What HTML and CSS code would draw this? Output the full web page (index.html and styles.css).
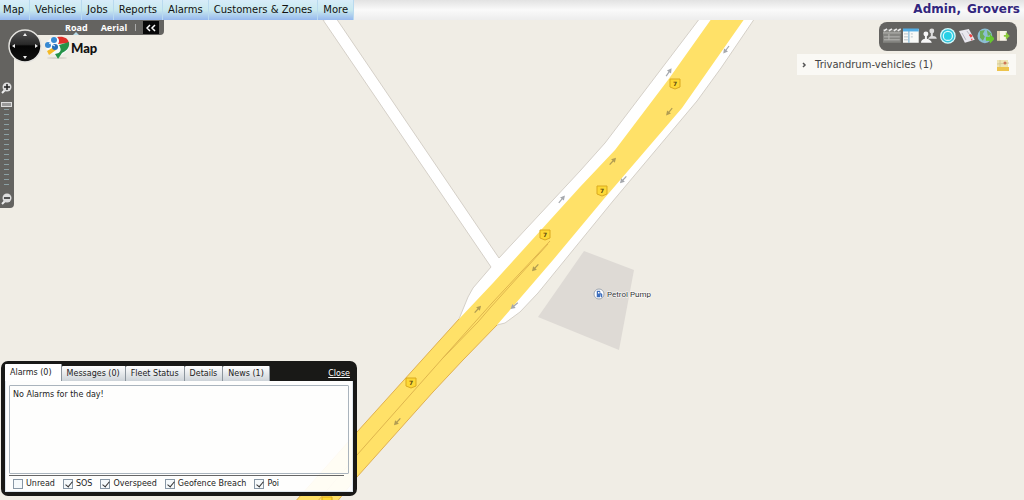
FILE: index.html
```html
<!DOCTYPE html>
<html lang="en">
<head>
<meta charset="utf-8">
<title>Fleet Map</title>
<link rel="stylesheet" href="styles.css">
</head>
<body>
<header class="topbar">
  <nav class="menu">
    <a href="#map">Map</a><a href="#vehicles">Vehicles</a><a href="#jobs">Jobs</a><a href="#reports">Reports</a><a href="#alarms">Alarms</a><a href="#customers">Customers &amp; Zones</a><a href="#more">More</a>
  </nav>
  <div class="account"><span>Admin,</span><span>Grovers</span></div>
</header>
<main class="stage">
  <svg class="map" aria-label="Street map">
    <defs>
      <g id="arrow"><path d="M-5 0H2" stroke="currentColor" stroke-width="1.2"/><path d="M0-2.5L4.5 0L0 2.5Z" fill="currentColor"/></g>
      <path id="shield" d="M-5-5H5V3L0 5L-5 3Z" fill="#fdd835" stroke="#dba91f"/>
    </defs>
    <g transform="translate(0 -20)">
      <path d="M323 20L491 267L473 288L468 297L459 319L497 325L505 323L520 312L538 293L613 201L697 101L721 68L755 18H700L605 143L580 171L499 258L336 18Z" fill="#fff" stroke="#d5d0c8"/>
      <path d="M712 18L668 80L615 150L580 187L493 283L459 319L357 432L294 503H336L357 477L433 392L463 360L497 325L553 260L603 200L682 108L745 18Z" fill="#ffe168"/>
      <path d="M459 319L357 432L294 503M336 503L357 477L433 392L463 360L497 325" fill="none" stroke="#e0b050"/>
      <path d="M550 241L492 303L442 359L357 455L317 502M548 244L490 308L478 322L442 359" fill="none" stroke="#dfb64d"/>
      <path d="M584 251L634 270L619 350L538 317Z" fill="#dedad5"/>
      <g color="#a5a8ad">
        <use href="#arrow" transform="translate(669 72) rotate(-55)"/>
        <use href="#arrow" transform="translate(726 50) rotate(127)"/>
        <use href="#arrow" transform="translate(623 180) rotate(132)"/>
        <use href="#arrow" transform="translate(562 199) rotate(-50)"/>
        <use href="#arrow" transform="translate(514 306) rotate(140)"/>
      </g>
      <g color="#b19c52">
        <use href="#arrow" transform="translate(669 112) rotate(130)"/>
        <use href="#arrow" transform="translate(613 161) rotate(-48)"/>
        <use href="#arrow" transform="translate(535 268) rotate(132)"/>
        <use href="#arrow" transform="translate(478 309) rotate(-48)"/>
        <use href="#arrow" transform="translate(397 422) rotate(132)"/>
      </g>
      <g class="route">
        <use href="#shield" x="675" y="84"/><text x="675" y="86">7</text>
        <use href="#shield" x="602" y="191"/><text x="602" y="193">7</text>
        <use href="#shield" x="545" y="235"/><text x="545" y="237">7</text>
        <use href="#shield" x="411" y="383"/><text x="411" y="385">7</text>
        <use href="#shield" x="327" y="502"/>
      </g>
      <circle cx="599" cy="294" r="5" fill="#fff" stroke="#9da5b0"/>
      <path d="M597 291h3v6h-3zM600 293l2 1v3h-1" fill="#3e6fbd" stroke="#3e6fbd" stroke-width=".5"/>
      <path d="M598 292h1.500v1.500h-1.500z" fill="#fff"/>
      <text class="place" x="607" y="297">Petrol Pump</text>
    </g>
  </svg>

  <section class="view-bar">
    <button class="view current">Road</button>
    <button class="view">Aerial</button>
    <span class="divider"></span>
    <button class="collapse" aria-label="Collapse"><svg width="10" height="8"><path d="M4 1L1 4L4 7M9 1L6 4L9 7" fill="none" stroke="#fff" stroke-width="1.5"/></svg></button>
  </section>
  <section class="zoom-bar">
    <button class="glass" aria-label="Zoom in"><svg width="14" height="14"><path d="M5 8L2 11" stroke="#eee" stroke-width="2"/><circle cx="7" cy="5" r="4.5" fill="#ddd"/><path d="M4 5H10M7 2V8" stroke="#222" stroke-width="1.5"/></svg></button>
    <div class="ticks"><span class="thumb"></span></div>
    <button class="glass" aria-label="Zoom out"><svg width="14" height="14"><path d="M5 8L2 11" stroke="#eee" stroke-width="2"/><circle cx="7" cy="5" r="4.5" fill="#ddd"/><path d="M4 5H10" stroke="#222" stroke-width="1.5"/></svg></button>
  </section>
  <button class="compass" aria-label="Pan map"><svg width="34" height="34">
    <defs><linearGradient id="ball" x2="0" y2="1"><stop offset="0" stop-color="#555"/><stop offset=".45" stop-color="#292929"/><stop offset=".5" stop-color="#050505"/><stop offset="1" stop-color="#111"/></linearGradient></defs>
    <circle cx="17" cy="17" r="16" fill="url(#ball)" stroke="#e4e3df" stroke-width="1.5"/>
    <path d="M17 4L19 7H15ZM17 30L19 27H15ZM4 17L7 15V19ZM30 17L27 19V15Z" fill="#eee"/></svg></button>
  <div class="brand">
    <svg width="26" height="24" aria-hidden="true">
      <ellipse cx="12" cy="22" rx="10" ry="1" fill="#d9d6ce"/>
      <path d="M12 1C20 0 25 4 24 11C23 17 16 17 13 23C11 21 11 20 10 18C2 17 1 14 1 10C2 4 6 1 12 1Z" fill="#f8fbfd"/>
      <path d="M12 1C19 0 23 2 24 7L13 8C15 5 14 3 12 1Z" fill="#df3029"/>
      <path d="M14 9L24 6C25 13 20 15 17 17L13 23L10 18C16 17 17 14 14 9Z" fill="#269348"/>
      <path d="M2 15L9 11L11 14L4 19Z" fill="#f4b925"/>
      <circle cx="9" cy="4" r="3" fill="#3689d2"/><circle cx="10" cy="11" r="3" fill="#246fbc"/><circle cx="3" cy="9" r="3" fill="#3689d2"/>
      <path d="M4 7L10 10" stroke="#f8fbfd"/>
    </svg><span>Map</span>
  </div>

  <aside class="side">
    <div class="toolbar">
      <button aria-label="Video"><svg viewBox="0 0 18 16"><path d="M0 1H18V15H0Z" fill="#858581"/><path d="M1 3L4 1M6 3L9 1M11 3L14 1M15 3L18 1" stroke="#eee" stroke-width="1.5"/><path d="M0 5H18M1 9H17M1 12H17M6 6V12" stroke="#b8b8b4"/></svg></button>
      <button aria-label="Grid"><svg viewBox="0 0 18 16"><path d="M1 1H17V15H1Z" fill="#f8f9f7"/><path d="M1 2H17" stroke="#54aee6" stroke-width="3"/><path d="M7 3V15" stroke="#69a9d1"/><path d="M2 6H6M2 9H6M2 12H6M9 6H11M9 9H11" stroke="#b8c2c9"/></svg></button>
      <button aria-label="Users"><svg viewBox="0 0 18 16"><circle cx="12" cy="3" r="2.500" fill="#ddd"/><path d="M8 11Q9 9 11 8V5H13V8Q17 8 17 11Z" fill="#ddd"/><circle cx="6" cy="6" r="2.500" fill="#f7f7f7"/><path d="M1 15Q1 12 5 11V8H7V11Q11 12 12 15Z" fill="#f7f7f7"/></svg></button>
      <button aria-label="Target"><svg viewBox="0 0 18 16"><circle cx="9" cy="8" r="8" fill="#d6fbfd"/><circle cx="9" cy="8" r="6" fill="none" stroke="#35c5dc" stroke-width="1.5"/><circle cx="9" cy="8" r="4" fill="#25d0e6"/></svg></button>
      <button aria-label="Cards"><svg viewBox="0 0 18 16"><path d="M1 3L11 1L17 12L7 15Z" fill="#e9e8ef"/><path d="M4 5L8 12M9 3L12 7" stroke="#b5b5bf"/><path d="M11 7L13 6L15 8L13 10ZM13 11L15 11L14 13Z" fill="#e44"/></svg></button>
      <button aria-label="World"><svg viewBox="0 0 18 16"><circle cx="8" cy="8" r="7.5" fill="#8dbfd4"/><path d="M3 3L8 2L6 6L8 9L6 13L3 10ZM10 2L15 6L11 8Z" fill="#6aae58"/><path d="M9 9H13V6L18 11L13 16V13H9Z" fill="#66c72f"/></svg></button>
      <button aria-label="Exit"><svg viewBox="0 0 18 16"><path d="M2 3H5V13H2Z" fill="#e5d3b4"/><path d="M5 3H12V13H5Z" fill="#faf5ea"/><path d="M9 7H11V4L15 8L11 12V9H9Z" fill="#8ccd3c"/></svg></button>
    </div>
    <div class="group">
      <button class="group-name"><svg width="6" height="8"><path d="M1 2L3 4L1 6" fill="none" stroke="#555" stroke-width="1.5"/></svg><span>Trivandrum-vehicles (1)</span></button>
      <button class="group-map" aria-label="Show on map"><svg width="12" height="12"><path d="M0 1H11V12H0Z" fill="#eee5b5"/><path d="M0 8H12V12H0Z" fill="#edc44d"/><path d="M3 1V8M0 5L12 4" stroke="#d5c998"/><circle cx="8" cy="4" r="1.500" fill="#ce7455"/></svg></button>
    </div>
  </aside>

  <section class="panel">
    <div class="tabs">
      <div class="tablist" role="tablist"><button class="tab active" role="tab" aria-selected="true">Alarms (0)</button><button class="tab" role="tab">Messages (0)</button><button class="tab" role="tab">Fleet Status</button><button class="tab" role="tab">Details</button><button class="tab" role="tab">News (1)</button></div>
      <a class="close" href="#close">Close</a>
    </div>
    <div class="panel-body">
      <div class="messages">No Alarms for the day!</div>
      <form class="filters">
        <label><input type="checkbox"><span>Unread</span></label>
        <label><input type="checkbox" checked><span>SOS</span></label>
        <label><input type="checkbox" checked><span>Overspeed</span></label>
        <label><input type="checkbox" checked><span>Geofence Breach</span></label>
        <label><input type="checkbox" checked><span>Poi</span></label>
      </form>
    </div>
  </section>
</main>
</body>
</html>
```
FILE: styles.css
```css
* { box-sizing: border-box; }
body { margin: 0; min-height: 100vh; display: flex; flex-direction: column; font-family: "DejaVu Sans", sans-serif; color: #222; }
button { border: 0; padding: 0; background: none; font: inherit; color: inherit; }
svg { display: block; }

.topbar { display: flex; justify-content: space-between; align-items: stretch; background: linear-gradient(#e2e2e2, #fafafa 50%, #ededed); }
.menu { display: flex; background: linear-gradient(#d7ecf9, #c9e9ee 50%, #96b8ee); }
.menu a { padding: 0 5px; font-size: 10px; line-height: 20px; color: #111; text-decoration: none; border-right: 1px solid #b9daef; }
.menu a:first-child { padding-left: 3px; }
.account { display: flex; gap: 6px; padding-right: 4px; font-size: 12px; line-height: 19px; font-weight: bold; color: #32267e; }

.stage { position: relative; flex: 1; overflow: hidden; background: #f0ede5; }
.map { position: absolute; inset: 0; width: 100%; height: 100%; }
.route { font: bold 6px "DejaVu Sans", sans-serif; text-anchor: middle; fill: #5b4710; }
.place { font: 8px Roboto, sans-serif; fill: #333; stroke: #fff; stroke-width: 1px; paint-order: stroke; }

.view-bar { position: absolute; top: 0; left: 0; display: flex; align-items: center; height: 15px; padding: 0 5px 0 65px; background: #646360; border-radius: 0 0 4px 0; color: #fff; font: bold 9px "Open Sans", sans-serif; }
.view { position: relative; margin-right: 13px; line-height: 14px; }
.view.current::after { content: ""; position: absolute; left: 8px; bottom: 0; border: 3px solid transparent; border-top: 0; border-bottom-color: #b8dce8; }
.divider { width: 1px; height: 7px; margin: 0 7px 0 -5px; background: #aaa; }
.collapse { display: grid; place-items: center; width: 16px; height: 13px; background: #080808; }
.zoom-bar { position: absolute; top: 0; left: 0; width: 14px; padding: 62px 0 1px; background: #646360; border-radius: 0 0 4px 0; }
.glass { display: block; }
.ticks { height: 97px; padding-top: 8px; }
.ticks::before { content: ""; display: block; width: 5px; height: 84px; margin-left: 4px; background: repeating-linear-gradient(#8ba0a4 0 1px, transparent 1px 5px); }
.thumb { position: absolute; top: 82px; left: 1px; width: 11px; height: 5px; background: #999; border: 1px solid #ddd; }
.compass { position: absolute; top: 9px; left: 8px; }
.brand { position: absolute; top: 16px; left: 45px; display: flex; align-items: center; font: 900 13px Lato, sans-serif; color: #111; }

.side { position: absolute; top: 2px; right: 7px; width: 220px; }
.toolbar { display: flex; gap: 1px; width: 138px; height: 29px; padding: 6px 4px 7px; margin-left: auto; background: #646360; border-radius: 8px; }
.toolbar button { width: 18px; height: 16px; }
.group { display: flex; justify-content: space-between; align-items: center; margin-top: 3px; margin-right: 1px; padding: 0 7px 0 5px; background: #faf9f5; }
.group-name { display: flex; align-items: center; gap: 7px; font-size: 10px; line-height: 21px; color: #444; }

.panel { position: absolute; left: 1px; bottom: 4px; width: 356px; border: 4px solid #191917; border-top-width: 3px; border-radius: 7px; font-size: 8px; }
.tabs { display: flex; justify-content: space-between; background: #191917; }
.tablist { display: flex; align-items: flex-end; }
.tab { height: 15px; padding: 0 5px; line-height: 15px; background: linear-gradient(#fff, #cdd3d8); border-right: 1px solid #8c959d; border-radius: 1px 1px 0 0; }
.tab.active { height: 17px; padding-right: 9px; background: #fff; }
.close { align-self: flex-end; padding-right: 3px; line-height: 14px; color: #fff; }
.panel-body { padding: 4px 3px 1px; background: rgba(255,255,255,.93); border: 1px solid #dfe7ee; border-top: 0; }
.messages { height: 89px; padding: 4px 3px; border: 1px solid #aab4bd; border-radius: 1px; }
.filters { display: flex; margin: 1px 5px 0 0; padding: 2px 0 0 4px; border-top: 1px solid #666; gap: 8px; }
.filters label { display: flex; align-items: center; gap: 3px; line-height: 12px; }
.filters input { appearance: none; position: relative; width: 10px; height: 10px; margin: 0; border: 1px solid #8897a5; background: #f5f9fb; }
.filters input:checked::after { content: ""; position: absolute; left: 3px; top: 0; width: 3px; height: 6px; border: solid #333; border-width: 0 1px 1px 0; transform: rotate(40deg); }
```
